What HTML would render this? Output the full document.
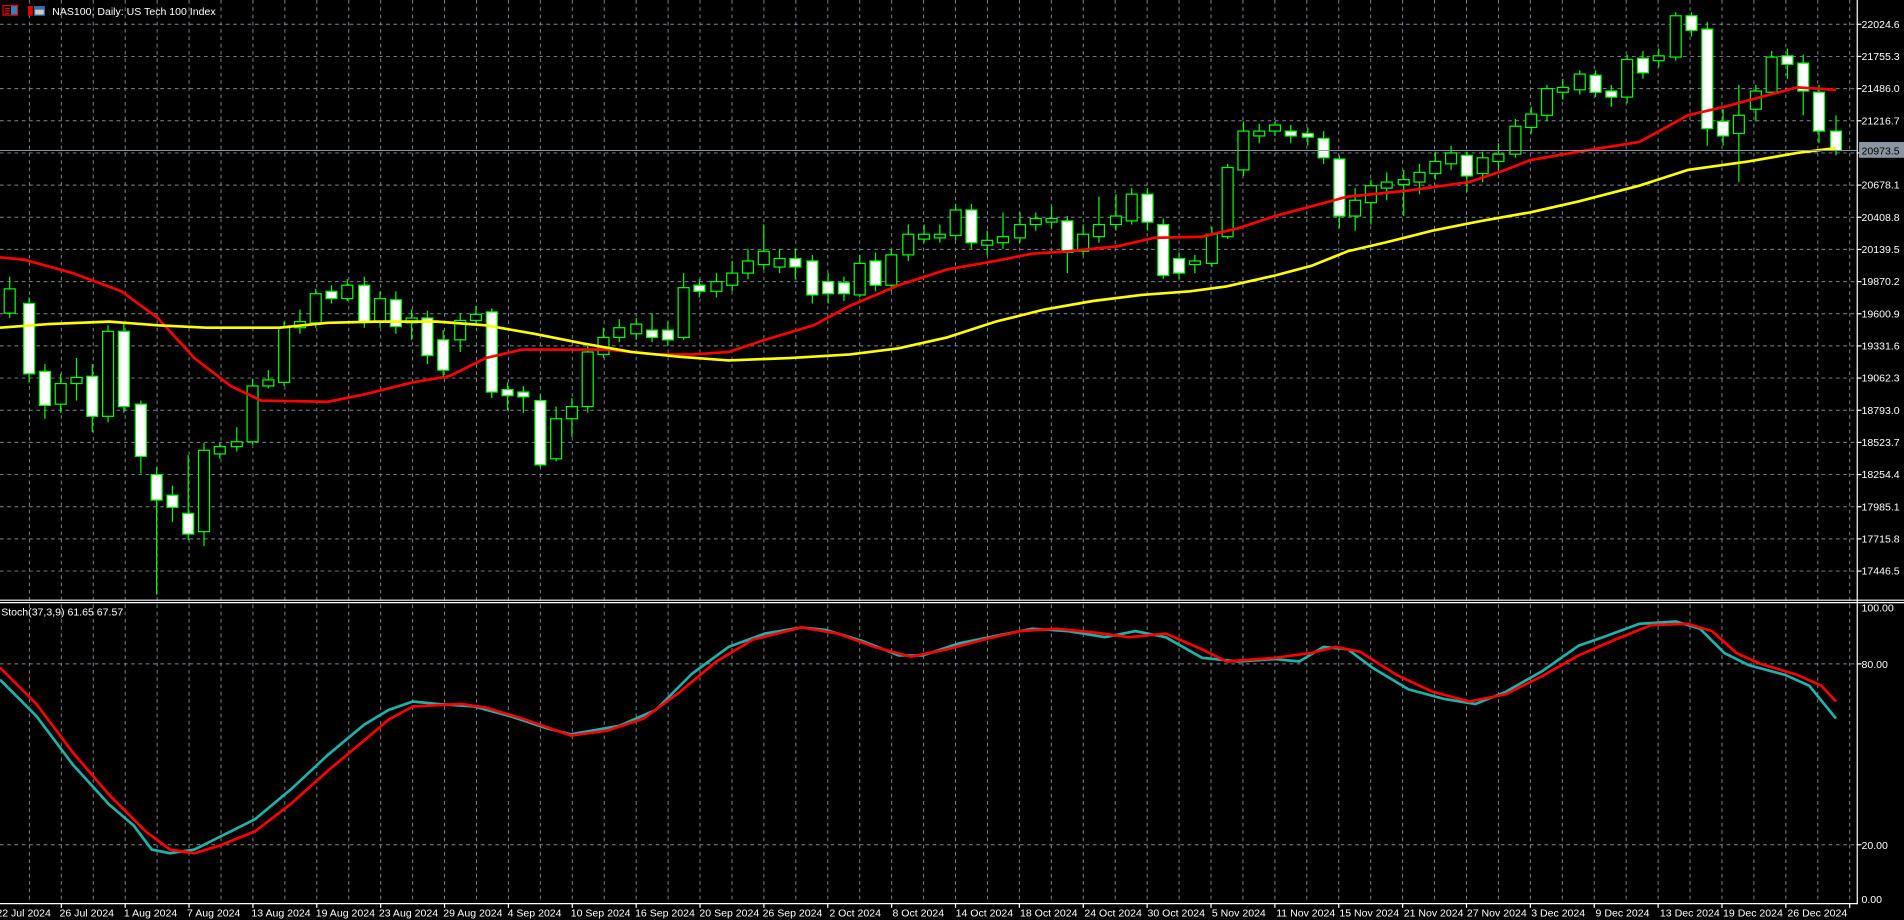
<!DOCTYPE html>
<html><head><meta charset="utf-8"><style>
html,body{margin:0;padding:0;background:#000;overflow:hidden}
svg{display:block}
text{font-family:"Liberation Sans",sans-serif;font-size:8.7px;fill:#fff}
</style></head><body>
<svg id="s" xmlns="http://www.w3.org/2000/svg" width="1904" height="920" viewBox="0 0 1568 758" preserveAspectRatio="none">
<rect width="1568" height="758" fill="#000"/>
<g id="grid" stroke="#7d8791" stroke-width="0.8" stroke-dasharray="3,3"></g>
<g id="candles"></g>
<polyline id="ma20" fill="none" stroke="#ff0000" stroke-width="2.2"/>
<polyline id="ma50" fill="none" stroke="#ffff00" stroke-width="2.2"/>
<line x1="0" y1="124" x2="1529" y2="124" stroke="#8a96a3" stroke-width="0.8"/>
<polyline id="stc" fill="none" stroke="#20b2aa" stroke-width="2.2"/>
<polyline id="str" fill="none" stroke="#ff0000" stroke-width="2.2"/>
<line x1="1529.5" y1="0" x2="1529.5" y2="745" stroke="#fff" stroke-width="1"/>
<line x1="0" y1="494.5" x2="1568" y2="494.5" stroke="#fff" stroke-width="1"/>
<line x1="0" y1="496.5" x2="1568" y2="496.5" stroke="#fff" stroke-width="1"/>
<line x1="0" y1="744.5" x2="1530" y2="744.5" stroke="#fff" stroke-width="1"/>
<g id="ticks" stroke="#fff" stroke-width="1"></g>
<rect x="2.5" y="4.5" width="12" height="8" fill="none" stroke="#e00" stroke-width="1"/>
<rect x="9" y="5" width="5" height="7" fill="#3a7cc0"/>
<line x1="4" y1="7" x2="8" y2="7" stroke="#e00"/><line x1="4" y1="9" x2="8" y2="9" stroke="#e00"/><line x1="4" y1="11" x2="8" y2="11" stroke="#e00"/>
<rect x="23" y="5" width="4" height="8" fill="#e00"/><rect x="28" y="5" width="9" height="8" fill="#3a6ea0"/><rect x="29" y="8" width="7" height="4" fill="#ccc"/>
<text x="43" y="12.5">NAS100, Daily:  US Tech 100 Index</text>
<text x="1" y="507">Stoch(37,3,9) 61.65 67.57</text>
<g id="plab">
<text x="1533" y="23">22024.6</text>
<text x="1533" y="49.5">21755.3</text>
<text x="1533" y="76">21486.0</text>
<text x="1533" y="102.5">21216.7</text>
<text x="1533" y="155.5">20678.1</text>
<text x="1533" y="182">20408.8</text>
<text x="1533" y="208.5">20139.5</text>
<text x="1533" y="235">19870.2</text>
<text x="1533" y="261.5">19600.9</text>
<text x="1533" y="288">19331.6</text>
<text x="1533" y="314.5">19062.3</text>
<text x="1533" y="341">18793.0</text>
<text x="1533" y="367.5">18523.7</text>
<text x="1533" y="394">18254.4</text>
<text x="1533" y="420.5">17985.1</text>
<text x="1533" y="447">17715.8</text>
<text x="1533" y="473.5">17446.5</text>
<text x="1533" y="504">100.00</text>
<text x="1533" y="550.5">80.00</text>
<text x="1533" y="699.5">20.00</text>
<text x="1533" y="744">0.00</text>
</g>
<rect x="1531" y="117" width="37" height="13" fill="#8a96a3"/>
<text x="1533" y="127.5" style="fill:#000">20973.5</text>
<g id="dlab">
<text x="-3" y="755">22 Jul 2024</text>
<text x="49" y="755">26 Jul 2024</text>
<text x="102" y="755">1 Aug 2024</text>
<text x="154" y="755">7 Aug 2024</text>
<text x="207" y="755">13 Aug 2024</text>
<text x="260" y="755">19 Aug 2024</text>
<text x="312" y="755">23 Aug 2024</text>
<text x="365" y="755">29 Aug 2024</text>
<text x="418" y="755">4 Sep 2024</text>
<text x="470" y="755">10 Sep 2024</text>
<text x="523" y="755">16 Sep 2024</text>
<text x="576" y="755">20 Sep 2024</text>
<text x="628" y="755">26 Sep 2024</text>
<text x="683" y="755">2 Oct 2024</text>
<text x="735" y="755">8 Oct 2024</text>
<text x="787" y="755">14 Oct 2024</text>
<text x="840" y="755">18 Oct 2024</text>
<text x="893" y="755">24 Oct 2024</text>
<text x="945" y="755">30 Oct 2024</text>
<text x="998" y="755">5 Nov 2024</text>
<text x="1051" y="755">11 Nov 2024</text>
<text x="1103" y="755">15 Nov 2024</text>
<text x="1156" y="755">21 Nov 2024</text>
<text x="1208" y="755">27 Nov 2024</text>
<text x="1261" y="755">3 Dec 2024</text>
<text x="1314" y="755">9 Dec 2024</text>
<text x="1367" y="755">13 Dec 2024</text>
<text x="1419" y="755">19 Dec 2024</text>
<text x="1472" y="755">26 Dec 2024</text>
</g>
</svg>
<script>
var NS="http://www.w3.org/2000/svg";
function el(p,n,a){var e=document.createElementNS(NS,n);for(var k in a)e.setAttribute(k,a[k]);p.appendChild(e);return e;}
var g=document.getElementById('grid'),tk=document.getElementById('ticks');
for(var x=24.2;x<1529;x+=26.3){el(g,'line',{x1:x,y1:0,x2:x,y2:744});}
var hy=[20,46.5,73,99.5,126,152.5,179,205.5,232,258.5,285,311.5,338,364.5,391,417.5,444,470.5];
hy.forEach(function(y){el(g,'line',{x1:0,y1:y,x2:1529,y2:y});el(tk,'line',{x1:1529,y1:y,x2:1533,y2:y});});
[547,696].forEach(function(y){el(g,'line',{x1:0,y1:y,x2:1529,y2:y});el(tk,'line',{x1:1529,y1:y,x2:1533,y2:y});});
for(var x=24.2+26.3;x<1529;x+=52.6){el(tk,'line',{x1:x,y1:744,x2:x,y2:748});}
var C=[[8,238,258,228,262,0],[24,250,308,245,315,1],[37,306,334,300,345,1],[50,316,333,308,340,0],[63,311,316,295,330,0],[76,310,343,300,356,1],[89,273,343,268,348,0],[102,273,335,265,340,1],[116,333,376,330,390,1],[129,391,412,385,490,1],[142,408,418,400,430,1],[155,423,440,375,445,1],[168,371,438,365,450,0],[181,368,374,365,378,0],[195,364,368,352,372,0],[208,318,364,312,366,0],[221,313,318,305,320,0],[234,270,315,265,318,0],[247,265,270,255,275,0],[260,242,266,238,270,0],[273,240,246,235,250,1],[286,235,246,230,248,0],[300,235,265,228,270,1],[313,246,265,240,270,0],[326,247,269,240,275,1],[339,262,266,255,280,0],[352,262,293,256,300,1],[365,280,305,272,310,1],[379,264,280,258,290,0],[392,259,264,252,268,0],[405,257,323,254,328,1],[418,321,326,315,338,1],[431,323,327,318,340,1],[445,330,383,325,385,1],[458,345,378,335,380,0],[471,335,345,328,360,0],[484,290,335,285,340,0],[497,278,292,270,295,0],[510,270,278,263,282,0],[524,267,275,262,280,0],[537,272,278,258,282,1],[550,272,280,265,285,1],[563,237,278,225,280,0],[576,235,240,230,245,1],[590,232,240,225,245,0],[603,225,235,215,240,0],[616,215,225,205,230,0],[629,207,218,185,222,0],[642,213,220,205,225,0],[655,213,220,205,230,1],[669,215,243,210,250,1],[682,232,242,225,250,1],[695,233,242,228,248,1],[708,217,243,210,245,0],[721,215,235,208,240,1],[734,210,235,205,240,0],[748,193,210,185,215,0],[761,193,197,185,200,0],[774,193,196,185,200,0],[787,173,194,168,198,0],[800,173,200,168,205,1],[813,198,202,190,210,0],[826,195,200,175,205,0],[840,185,196,175,200,0],[853,180,185,175,190,0],[866,180,183,170,188,0],[879,182,208,178,225,1],[892,193,207,185,210,0],[905,185,195,162,200,0],[919,178,185,160,190,0],[932,160,182,155,185,0],[945,160,183,155,190,1],[958,185,227,180,230,1],[971,213,225,208,230,1],[984,215,218,210,225,0],[998,193,217,187,220,0],[1011,138,195,135,197,0],[1024,108,140,100,145,0],[1037,108,112,102,118,0],[1050,103,108,100,112,0],[1063,108,112,103,118,1],[1077,110,113,105,120,1],[1090,114,130,108,135,1],[1103,131,178,128,188,1],[1116,165,178,155,190,0],[1129,153,167,148,185,0],[1142,150,155,142,165,0],[1156,148,152,140,178,0],[1169,142,150,135,160,0],[1182,133,143,125,148,0],[1195,126,135,120,140,0],[1208,128,145,125,158,1],[1221,130,143,125,150,0],[1234,127,133,118,140,0],[1248,104,127,98,130,0],[1261,94,105,88,110,0],[1274,73,95,70,100,0],[1287,72,76,65,82,0],[1301,61,74,58,78,0],[1314,62,76,58,80,1],[1327,75,80,70,88,1],[1340,49,80,45,85,0],[1353,48,60,42,65,1],[1366,46,50,40,55,0],[1380,13,47,10,50,0],[1393,13,25,10,30,1],[1406,24,106,18,120,1],[1419,100,112,90,120,1],[1432,95,110,70,150,0],[1446,75,90,70,100,0],[1459,47,76,42,78,0],[1472,46,53,40,65,1],[1485,52,75,45,95,1],[1498,76,108,70,118,1],[1512,108,124,95,128,1]];
var cg=document.getElementById('candles');
C.forEach(function(c){
 el(cg,'line',{x1:c[0],y1:c[3],x2:c[0],y2:c[4],stroke:'#00ff00','stroke-width':1});
 el(cg,'rect',{x:c[0]-4.5,y:c[1],width:9,height:Math.max(c[2]-c[1],1),fill:c[5]?'#fff':'#000',stroke:'#00ff00','stroke-width':1});
});
function pl(id,a){document.getElementById(id).setAttribute('points',a.map(function(p){return p.join(',')}).join(' '));}
pl('ma20',[[0,212],[20,214],[60,225],[100,240],[130,262],[160,295],[190,318],[215,330],[270,331],[300,325],[340,315],[370,310],[400,295],[430,288],[470,288],[500,288],[540,292],[570,292],[600,290],[630,280],[670,268],[700,252],[740,235],[780,222],[820,215],[850,209],[880,207],[920,203],[950,196],[990,195],[1020,188],[1050,178],[1080,170],[1110,162],[1160,157],[1210,150],[1240,140],[1260,132],[1300,125],[1350,117],[1390,95],[1420,88],[1450,80],[1480,72],[1512,74]]);
pl('ma50',[[0,270],[40,267],[90,265],[130,268],[170,270],[230,270],[270,266],[310,265],[360,265],[400,268],[440,275],[480,283],[520,290],[560,294],[600,297],[650,295],[700,292],[740,287],[780,278],[820,265],[860,255],[900,248],[940,243],[980,240],[1010,236],[1050,227],[1080,219],[1110,207],[1140,200],[1180,190],[1220,182],[1260,175],[1300,166],[1350,153],[1390,140],[1440,133],[1480,126],[1512,122]]);
pl('stc',[[0,560],[30,590],[60,630],[90,663],[110,680],[125,700],[140,703],[160,700],[180,690],[210,675],[240,650],[270,622],[300,597],[320,585],[340,578],[360,580],[390,582],[420,590],[450,600],[470,605],[510,598],[540,585],[570,555],[600,533],[630,522],[660,517],[680,519],[710,528],[740,540],[760,540],[790,530],[820,524],[850,518],[880,520],[910,525],[935,520],[960,525],[990,542],[1020,545],[1050,543],[1070,545],[1090,533],[1110,535],[1130,550],[1160,568],[1190,576],[1215,580],[1240,570],[1270,553],[1300,532],[1320,525],[1350,514],[1380,512],[1400,518],[1420,538],[1440,548],[1470,556],[1490,565],[1512,592]]);
pl('str',[[0,550],[30,580],[60,620],[90,655],[120,685],[140,700],[160,703],[180,697],[210,685],[240,662],[270,635],[300,610],[320,593],[340,582],[380,580],[400,583],[430,592],[470,606],[500,602],[530,592],[560,570],[590,545],[620,527],[660,517],[690,522],[720,533],[750,541],[780,535],[810,527],[840,520],[870,518],[900,521],[930,525],[960,522],[990,535],[1010,545],[1050,542],[1080,538],[1100,533],[1120,537],[1150,556],[1180,570],[1210,578],[1240,572],[1270,557],[1300,540],[1330,527],[1360,515],[1390,514],[1410,520],[1430,538],[1450,547],[1480,556],[1500,565],[1512,578]]);
</script>
</body></html>
